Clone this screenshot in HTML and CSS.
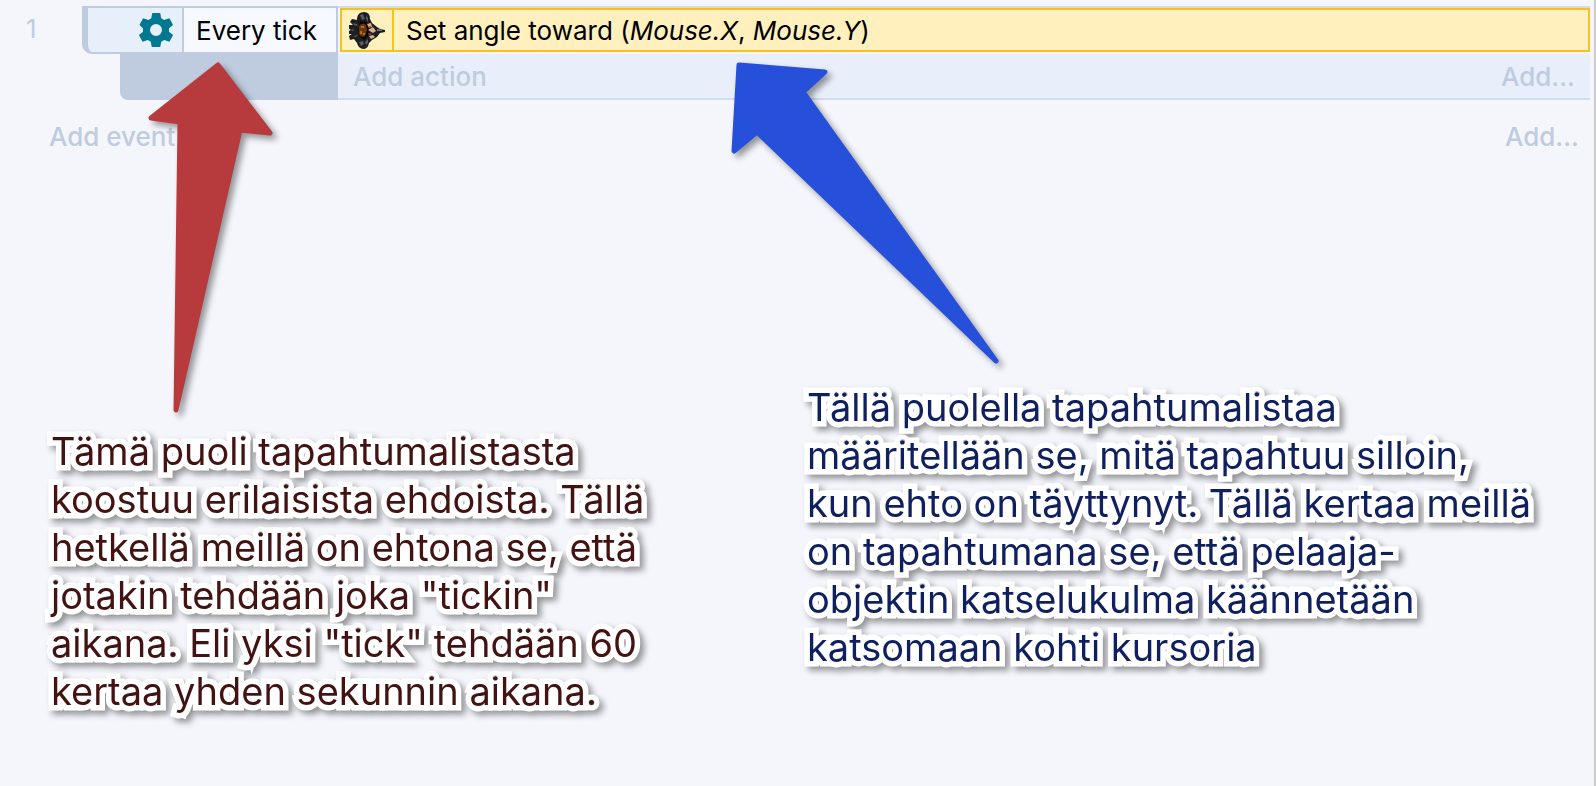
FILE: index.html
```html
<!DOCTYPE html>
<html lang="fi">
<head>
<meta charset="utf-8">
<title>Event sheet</title>
<link rel="stylesheet" href="styles.css">
</head>
<body>
<main class="sheet">
  <section class="event">
    <div class="conditions">
      <span class="number">1</span>
      <div class="condition">
        <span class="condition-icon">
          <svg width="34" height="36" viewBox="0 0 34 36" aria-hidden="true">
            <path fill="#00788f" fill-rule="evenodd" d="M13.5 1h7q.8 0 .9.8l.8 4.400 3 1.800 4.300-1.600q.8-.2 1.200.4l3 5.400q.4.700-.2 1.200l-3.500 2.900v3.400l3.500 2.900q.6.500.2 1.200l-3 5.400q-.4.600-1.200.4l-4.300-1.600-3 1.800-.8 4.400q-.1.800-.9.800h-7q-.8 0-.9-.8l-.8-4.400-3-1.800-4.300 1.600q-.8.200-1.200-.4l-3-5.400q-.4-.700.2-1.200l3.500-2.900v-3.400L1 13.400q-.6-.500-.2-1.200l3-5.400q.4-.6 1.200-.4L9.300 8l3-1.800.8-4.400q.1-.8.400-.8zM17 12a6 6 0 1 0 0 12a6 6 0 1 0 0-12z"/>
          </svg>
        </span>
        <span class="condition-text">Every tick</span>
      </div>
      <div class="condition-foot"></div>
    </div>
    <div class="actions">
      <div class="action">
        <span class="action-icon">
          <svg width="36" height="38" viewBox="0 0 36 38" aria-hidden="true">
            <path fill="#1d1e21" d="M8 7q1-6 7-6 6 0 6 7l2 4 5 4 3 2 5 1v2l-5 1-3 4-5 3-3 3q-1 6-6 6-5-1-6-6l-3-4-4 1-1-4 3-2-3 0-1-3 3-1-3-2 1-3 4 0-3-3 2-3 5 1z"/>
            <path fill="#5b5c61" d="M11 4l3-1 2 5-3 1zM17 4l2 3v4l-2-3zM4 12l4 1 1 2-4-1zM10 31l4-1 1 3-3 2zM16 31l3-3v4l-2 2zM4 25l5-1-2 2zM2 18l4 1-3 1zM20 12l4 3-3-1z"/>
            <path fill="#08080a" d="M11 10l6 1 3 5v8l-5 5-4-3-2-6z"/>
            <path fill="#6a360d" d="M10 15q3-4 7-1l1 5-2 6q-4 2-6-2z"/>
            <path fill="#c26a13" d="M12 15h3v2h-3zM11 20h2v3h-2zM14 22h2v2h-2z"/>
            <path fill="#e0ac8b" d="M18 13l4-1 1 4-3 1zM19 19l5-3 3 4-3 2zM20 25l4-1 2 2-4 2z"/>
            <path fill="#74392f" d="M20 15l3 1-2 2zM19 22l3 0 0 2-2 1z"/>
            <path fill="#77787c" d="M28 18l5 1v1h-5z"/>
          </svg>
        </span>
        <span class="action-text">Set angle toward (<em>Mouse.X</em>, <em>Mouse.Y</em>)</span>
      </div>
      <div class="action-foot">
        <button class="add" type="button">Add action</button>
        <button class="add" type="button">Add...</button>
      </div>
    </div>
  </section>
  <div class="sheet-foot">
    <button class="add" type="button">Add event</button>
    <button class="add" type="button">Add...</button>
  </div>
  <section class="notes">
    <p class="note note-condition">Tämä puoli tapahtumalistasta<br>koostuu erilaisista ehdoista. Tällä<br>hetkellä meillä on ehtona se, että<br>jotakin tehdään joka "tickin"<br>aikana. Eli yksi "tick" tehdään 60<br>kertaa yhden sekunnin aikana.</p>
    <p class="note note-action">Tällä puolella tapahtumalistaa<br>määritellään se, mitä tapahtuu silloin,<br>kun ehto on täyttynyt. Tällä kertaa meillä<br>on tapahtumana se, että pelaaja-<br>objektin katselukulma käännetään<br>katsomaan kohti kursoria</p>
  </section>
  <svg class="arrows" width="1020" height="430" viewBox="0 0 1020 430" aria-hidden="true">
    <path class="arrow-red" d="M218 65L270 133L240 130L176 410L180 122L151 118Z"/>
    <path class="arrow-blue" d="M739 65L825 72L803 92L996 361L757 132L734 151Z"/>
  </svg>
</main>
</body>
</html>
```
FILE: styles.css
```css
* {
  box-sizing: border-box;
}

body {
  margin: 0;
  background: #f5f6fc;
  color: #000;
  font: 26px/32px Inter, "Liberation Sans", sans-serif;
}

.sheet {
  position: relative;
  min-height: 100vh;
  padding-top: 6px;
  border-right: 2px solid #ccc;
}

.event {
  display: grid;
  grid-template-columns: 338px 1fr;
  margin-right: 4px;
}

.conditions {
  display: grid;
  grid-template-columns: 82px 1fr;
}

.number {
  padding: 7px 0 0 26px;
  color: #bfccdf;
}

.condition {
  display: flex;
  height: 48px;
  border: 2px solid #bfccdf;
  border-left-width: 6px;
  border-radius: 0 0 0 10px;
  background: #e7effa;
}

.condition-icon {
  display: flex;
  flex: 0 0 96px;
  align-items: center;
  justify-content: flex-end;
  padding-right: 9px;
  border-right: 2px solid #bfccdf;
}

.condition-text {
  flex: 1;
  padding: 7px 0 0 12px;
  background: #f6f9ff;
  white-space: nowrap;
}

.condition-foot {
  grid-column: 2;
  height: 46px;
  margin-left: 38px;
  border-radius: 0 0 0 8px;
  background: #bfccdf;
}

.actions {
  border-top: 2px solid #d0ddec;
  border-bottom: 2px solid #d0ddec;
}

.action {
  display: flex;
  height: 44px;
  margin: 0 0 2px 2px;
  border: 2px solid #f5c321;
  background: #fff0bd;
}

.action-icon {
  display: flex;
  flex: 0 0 52px;
  align-items: center;
  justify-content: center;
  border-right: 2px solid #f5c321;
}

.action-text {
  padding: 5px 0 0 12px;
  white-space: nowrap;
}

.action-foot {
  display: flex;
  justify-content: space-between;
  height: 44px;
  padding: 2px 15px 0;
  background: #e8effb;
}

.add {
  padding: 0;
  border: 0;
  background: none;
  color: #bfccdf;
  font: inherit;
  font-weight: 500;
}

.sheet-foot {
  display: flex;
  justify-content: space-between;
  padding: 21px 15px 0 49px;
}

.notes {
  display: grid;
  grid-template-columns: 756px 1fr;
  align-items: start;
  padding: 230px 0 0 51px;
}

.note {
  margin: 0;
  font-size: 38px;
  line-height: 48px;
  white-space: nowrap;
  -webkit-text-stroke: 11px #fff;
  paint-order: stroke fill;
  filter: drop-shadow(4px 4px 3px rgba(0, 0, 0, 0.4));
}

.note-condition {
  padding-top: 44px;
  color: #431313;
}

.note-action {
  color: #10205f;
}

.arrows {
  position: absolute;
  top: 0;
  left: 0;
  pointer-events: none;
  filter: drop-shadow(4px 4px 3px rgba(0, 0, 0, 0.4));
}

.arrow-red,
.arrow-blue {
  stroke-width: 5px;
  stroke-linejoin: round;
}

.arrow-red {
  fill: #b73b3d;
  stroke: #b73b3d;
}

.arrow-blue {
  fill: #264fda;
  stroke: #264fda;
}
```
